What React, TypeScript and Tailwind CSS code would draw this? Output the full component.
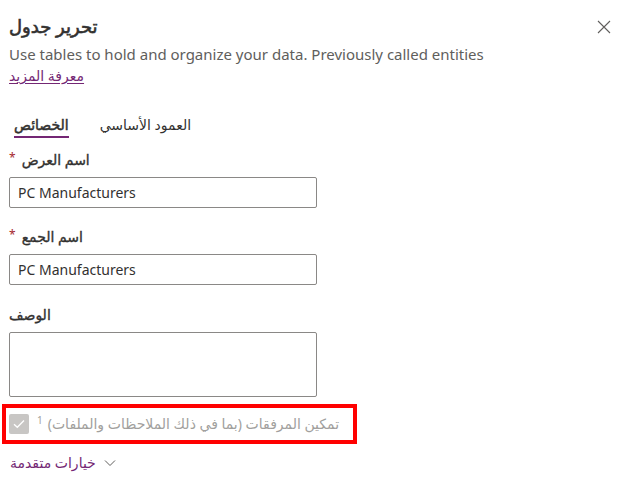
import React from "react";

const font = { fontFamily: '"Segoe UI", "Noto Sans", "DejaVu Sans", sans-serif' };

function Label({ text, required }: { text: string; required?: boolean }) {
  return (
    <div className="h-[20px] leading-[20px] text-[14px] text-[#323130] [-webkit-text-stroke:0.35px_#323130]">
      <span dir="rtl" className="inline-block">
        {text}
        {required && (
          <span className="text-[#a4262c] mr-[6px] text-[12px] align-top relative top-[-2px] [-webkit-text-stroke:0px]">
            *
          </span>
        )}
      </span>
    </div>
  );
}

export default function App() {
  return (
    <div className="w-[637px] h-[503px] bg-white overflow-hidden" style={font}>
      <div className="pl-[9px] pr-[26px] pt-[12px]">
        <div className="flex items-start justify-between">
          <div className="text-[18px] leading-[28px] text-[#323130] [-webkit-text-stroke:0.6px_#323130]">
            تحرير جدول
          </div>
          <svg width="14" height="14" viewBox="0 0 14 14" className="mt-[8px]">
            <path d="M1 1L13 13M13 1L1 13" stroke="#605e5c" strokeWidth="1.1" />
          </svg>
        </div>
        <div className="mt-[4px] text-[15px] leading-[20px] text-[#605e5c]">
          Use tables to hold and organize your data. Previously called entities
        </div>
        <div className="mt-[2px] text-[14px] leading-[20px]">
          <a className="text-[#742774] underline underline-offset-2">معرفة المزيد</a>
        </div>
        <div className="mt-[29px] flex items-start gap-[31px] pl-[5px] text-[14px] leading-[20px]">
          <div className="flex flex-col items-center">
            <span className="text-[#323130] [-webkit-text-stroke:0.5px_#323130]">الخصائص</span>
            <span className="mt-[1px] h-[2px] w-full bg-[#742774]" />
          </div>
          <span className="text-[#323130]">العمود الأساسي</span>
        </div>

        <div className="mt-[12px]">
          <Label text="اسم العرض" required />
          <div className="mt-[7px] w-[308px] h-[31px] border border-[#8a8886] rounded-[2px] px-[8px] flex items-center text-[14px] text-[#323130]">
            PC Manufacturers
          </div>
        </div>
        <div className="mt-[19px]">
          <Label text="اسم الجمع" required />
          <div className="mt-[7px] w-[308px] h-[31px] border border-[#8a8886] rounded-[2px] px-[8px] flex items-center text-[14px] text-[#323130]">
            PC Manufacturers
          </div>
        </div>
        <div className="mt-[20px]">
          <Label text="الوصف" />
          <div className="mt-[7px] w-[308px] h-[65px] border border-[#8a8886] rounded-[2px]" />
        </div>
      </div>

      <div className="ml-[2px] mt-[7px] w-[355px] h-[40px] border-[4px] border-[#ff0000] flex items-center pl-[3px]">
        <div className="w-[20px] h-[20px] rounded-[2px] bg-[#c8c6c4] flex items-center justify-center">
          <svg width="12" height="10" viewBox="0 0 12 10">
            <path d="M1 5.2L4.3 8.3L11 1.5" fill="none" stroke="white" strokeWidth="1.3" />
          </svg>
        </div>
        <span dir="rtl" className="ml-[8px] text-[14px] text-[#a19f9d] leading-[20px]">
          تمكين المرفقات (بما في ذلك الملاحظات والملفات)
          <span className="text-[10px] mr-[5px] relative top-[-5px]">1</span>
        </span>
      </div>

      <div className="mt-[9px] ml-[10px] flex items-center gap-[8px] text-[14px] leading-[20px]">
        <span className="text-[#742774]">خيارات متقدمة</span>
        <svg width="12" height="8" viewBox="0 0 12 8">
          <path d="M1 1.5L6 6.5L11 1.5" fill="none" stroke="#605e5c" strokeWidth="1" />
        </svg>
      </div>
    </div>
  );
}
